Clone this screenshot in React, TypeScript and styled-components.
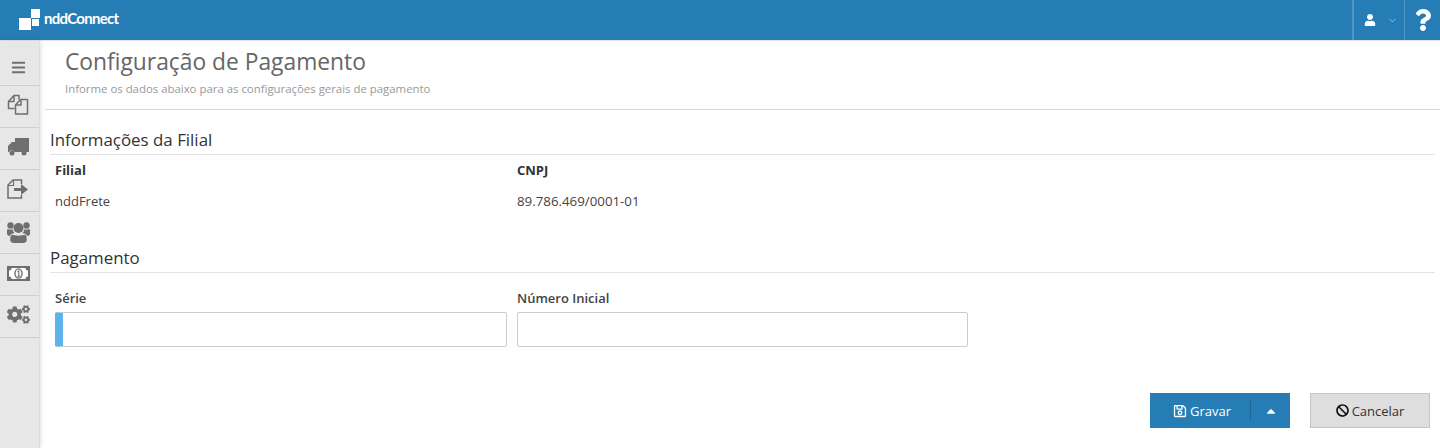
import React from "react";
import styled, { createGlobalStyle } from "styled-components";
import { FaBars, FaCogs, FaUser, FaQuestion, FaRegSave, FaBan, FaCaretUp } from "react-icons/fa";
import { ChevronDown } from "lucide-react";

const Global = createGlobalStyle`
  html, body { margin: 0; padding: 0; background: #fff; }
  body { font-family: "Open Sans", "Liberation Sans", sans-serif; color: #333; font-size: 13px; }
  * { box-sizing: border-box; }
`;

const Page = styled.div`
  width: 1440px;
  height: 448px;
  overflow: hidden;
  display: flex;
  flex-direction: column;
`;

const TopBar = styled.header`
  height: 40px;
  flex: none;
  background: #267db5;
  display: flex;
  align-items: stretch;
  justify-content: space-between;
`;

const Brand = styled.div`
  display: flex;
  align-items: center;
  padding: 0 0 1px 19px;
  gap: 4px;
`;

const BrandName = styled.span`
  color: #fff;
  font-family: "Lato", "Open Sans", sans-serif;
  font-size: 15px;
  font-weight: 700;
  letter-spacing: -0.7px;
  margin-bottom: 3px;
`;

const TopActions = styled.div`
  display: flex;
  align-items: stretch;
`;

const UserButton = styled.div`
  width: 53px;
  border-left: 2px solid #4f96c4;
  border-right: 1px solid #4f96c4;
  display: flex;
  align-items: center;
  color: #fff;
  padding-left: 10px;
  gap: 11px;
  font-size: 12px;
  svg + svg { color: #c4dff0; }
`;

const HelpButton = styled.div`
  width: 35px;
  display: flex;
  align-items: center;
  justify-content: center;
  color: #fff;
  font-size: 22px;
`;

const Body = styled.div`
  flex: 1;
  display: flex;
  min-height: 0;
  border-top: 1px solid #e3e3e3;
`;

const Sidebar = styled.nav`
  width: 40px;
  flex: none;
  background: #e7e7e7;
  border-right: 1px solid #dcdcdc;
  box-shadow: 1px 0 4px rgba(0, 0, 0, 0.12);
`;

const NavItem = styled.div<{ $first?: boolean; $lift?: number }>`
  height: ${(p) => (p.$first ? 45 : 42)}px;
  padding-top: ${(p) => (p.$first ? 9 : 0)}px;
  padding-right: 3px;
  padding-bottom: ${(p) => p.$lift ?? 0}px;
  display: flex;
  align-items: center;
  justify-content: center;
  border-bottom: 1px solid #cfcfcf;
  color: #6f6f6f;
`;

const Main = styled.main`
  flex: 1;
  min-width: 0;
  padding-left: 5px;
  display: flex;
  flex-direction: column;
`;

const PageHead = styled.div`
  height: 69px;
  border-bottom: 1px solid #d9d9d9;
  padding: 5px 0 0 20px;
`;

const Title = styled.h1`
  margin: 0;
  font-size: 22.8px;
  line-height: 32px;
  font-weight: 400;
  color: #666;
`;

const Subtitle = styled.p`
  margin: 3px 0 0;
  font-size: 11.4px;
  line-height: 16px;
  color: #999;
`;

const Content = styled.div`
  padding: 0 5px;
  flex: 1;
  display: flex;
  flex-direction: column;
`;

const SectionTitle = styled.h2<{ $top: number }>`
  margin: ${(p) => p.$top}px 0 0;
  font-size: 16.9px;
  line-height: 24px;
  height: 27px;
  font-weight: 530;
  color: #333;
  border-bottom: 1px solid #e3e3e3;
`;

const Grid = styled.div`
  display: grid;
  grid-template-columns: 452px 451px;
  column-gap: 10px;
  padding-left: 5px;
`;

const HeadCell = styled.div`
  font-weight: 700;
  font-size: 13px;
  line-height: 18px;
  margin-top: 6px;
  color: #333;
`;

const ValueCell = styled.div`
  font-size: 13px;
  line-height: 18px;
  margin-top: 13px;
  color: #444;
`;

const Figures = styled.span`
  font-size: 13.3px;
`;

const FieldLabel = styled.label`
  display: block;
  font-size: 13px;
  font-weight: 600;
  line-height: 18px;
  color: #444;
  margin-top: 16px;
  margin-bottom: 5px;
`;

const Input = styled.div<{ $required?: boolean }>`
  height: 35px;
  border: 1px solid #ccc;
  border-radius: 2px;
  background: #fff;
  ${(p) => (p.$required ? "border-left: 8px solid #5cb3ec;" : "")}
`;

const Actions = styled.div`
  display: flex;
  justify-content: flex-end;
  gap: 20px;
  margin-top: 46px;
  padding-right: 5px;
`;

const SaveButton = styled.div`
  width: 140px;
  height: 35px;
  background: #267db5;
  color: #fff;
  display: flex;
  align-items: center;
  font-size: 13px;
`;

const SaveMain = styled.div`
  width: 101px;
  height: 21px;
  border-right: 1px solid #1d6595;
  display: flex;
  align-items: center;
  justify-content: flex-end;
  gap: 3px;
  padding-right: 19px;
  svg { font-size: 14px; }
`;

const SaveCaret = styled.div`
  flex: 1;
  display: flex;
  justify-content: center;
  align-items: center;
  font-size: 14px;
`;

const CancelButton = styled.div`
  width: 120px;
  height: 35px;
  background: #dedede;
  border: 1px solid #c4c4c4;
  color: #333;
  display: flex;
  align-items: center;
  justify-content: center;
  gap: 3px;
  font-size: 13px;
  svg { font-size: 13px; color: #111; }
`;

const Logo = () => (
  <svg width="21" height="21" viewBox="0 0 21 21" fill="#fff">
    <rect x="0" y="9" width="12" height="12" />
    <rect x="13" y="10" width="7" height="7" />
    <rect x="12" y="0" width="9" height="9" />
  </svg>
);

const FilesIcon = () => (
  <svg width="22" height="21" viewBox="0 0 22 21" fill="none" stroke="#6f6f6f" strokeWidth="1.5" strokeLinejoin="round">
    <path d="M7.500 14.500H1.500V7.500L7 1.500h5v4" />
    <path d="M1.500 7.500H7V1.500" />
    <path d="M8.500 11l5-5.500h7V20H8.500z" />
    <path d="M8.500 11H14V5.500" />
  </svg>
);

const TruckIcon = () => (
  <svg width="21" height="18" viewBox="0 0 21 18" fill="#6f6f6f">
    <path d="M7 0h14v14H6.500a3 3 0 0 0-5.500 0H0V8l4-4h3z" />
    <rect x="13" y="13" width="1" height="1" />
    <circle cx="4" cy="15" r="2.500" />
    <circle cx="16" cy="15" r="2.500" />
  </svg>
);

const ExportIcon = () => (
  <svg width="22" height="20" viewBox="0 0 22 20" fill="none">
    <path d="M14.500 5V1H6L1 6v13h13.500v-3" stroke="#6f6f6f" strokeWidth="1.500" />
    <path d="M1 6.500h5.500V1" stroke="#6f6f6f" strokeWidth="1.200" />
    <path d="M7 9h7V5l7 5.500-7 5.500v-4H7z" fill="#6f6f6f" />
  </svg>
);

const UsersIcon = () => (
  <svg width="23" height="21" viewBox="0 0 23 21" fill="#6f6f6f">
    <circle cx="11.500" cy="6" r="5" />
    <circle cx="3.500" cy="3.500" r="3.200" />
    <circle cx="19.500" cy="3.500" r="3.200" />
    <path d="M5 12.500c2 1.500 11 1.500 13 0 1.500 1 1.800 3 1.800 5.500 0 2-1.800 3-3.800 3H7c-2 0-3.800-1-3.800-3 0-2.500.3-4.500 1.800-5.500z" />
    <path d="M0 9c0-1.500.5-2 1-2 1.500 1 3.500 1 4.500 0 .2 1.500 1 3 2 4-2.500.3-4 1.500-4.800 3C1 14 0 13 0 11.500z" />
    <path d="M23 9c0-1.500-.5-2-1-2-1.500 1-3.500 1-4.500 0-.2 1.500-1 3-2 4 2.500.3 4 1.500 4.800 3 1.700 0 2.700-1 2.700-2.500z" />
  </svg>
);

const MoneyIcon = () => (
  <svg width="23" height="15" viewBox="0 0 23 15">
    <rect width="23" height="15" fill="#6f6f6f" />
    <path fill="#fff" d="M4.500 2h14a2.500 2.500 0 0 0 2.500 2.500v6a2.500 2.500 0 0 0-2.500 2.500h-14A2.500 2.500 0 0 0 2 10.500v-6A2.500 2.500 0 0 0 4.500 2z" />
    <ellipse cx="11.500" cy="7.500" rx="4.200" ry="5.200" fill="#6f6f6f" />
    <ellipse cx="11.500" cy="7.500" rx="2.800" ry="3.900" fill="#fff" />
    <path d="M10.500 5.800l1.300-.8v5M10.300 10.200h3" stroke="#6f6f6f" strokeWidth="1.100" fill="none" />
  </svg>
);

export default function App() {
  return (
    <Page>
      <Global />
      <TopBar>
        <Brand>
          <Logo />
          <BrandName>nddConnect</BrandName>
        </Brand>
        <TopActions>
          <UserButton>
            <FaUser />
            <ChevronDown size={11} strokeWidth={1.4} />
          </UserButton>
          <HelpButton>
            <FaQuestion />
          </HelpButton>
        </TopActions>
      </TopBar>
      <Body>
        <Sidebar>
          <NavItem $first><FaBars size={15} /></NavItem>
          <NavItem $lift={4}><FilesIcon /></NavItem>
          <NavItem $lift={3}><TruckIcon /></NavItem>
          <NavItem $lift={4}><ExportIcon /></NavItem>
          <NavItem><UsersIcon /></NavItem>
          <NavItem $lift={2}><MoneyIcon /></NavItem>
          <NavItem $lift={4}><FaCogs size={23} /></NavItem>
        </Sidebar>
        <Main>
          <PageHead>
            <Title>Configuração de Pagamento</Title>
            <Subtitle>Informe os dados abaixo para as configurações gerais de pagamento</Subtitle>
          </PageHead>
          <Content>
            <SectionTitle $top={18}>Informações da Filial</SectionTitle>
            <Grid>
              <HeadCell>Filial</HeadCell>
              <HeadCell>CNPJ</HeadCell>
              <ValueCell>nddFrete</ValueCell>
              <ValueCell><Figures>89.786.469/0001-01</Figures></ValueCell>
            </Grid>
            <SectionTitle $top={36}>Pagamento</SectionTitle>
            <Grid>
              <div>
                <FieldLabel>Série</FieldLabel>
                <Input $required />
              </div>
              <div>
                <FieldLabel>Número Inicial</FieldLabel>
                <Input />
              </div>
            </Grid>
            <Actions>
              <SaveButton>
                <SaveMain><FaRegSave />Gravar</SaveMain>
                <SaveCaret><FaCaretUp /></SaveCaret>
              </SaveButton>
              <CancelButton><FaBan />Cancelar</CancelButton>
            </Actions>
          </Content>
        </Main>
      </Body>
    </Page>
  );
}
